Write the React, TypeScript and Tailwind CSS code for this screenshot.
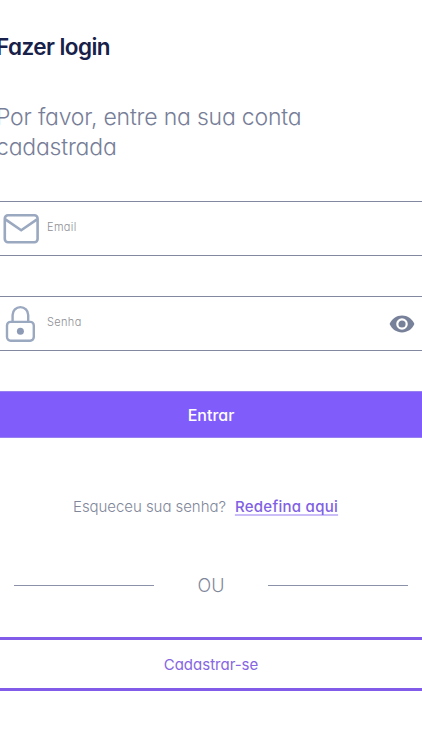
import React, { useState } from 'react';

const MailIcon: React.FC = () => (
    <svg viewBox="0 0 36 32" className="w-9 h-8 shrink-0" fill="none" stroke="#9aa8c0" strokeWidth="2.6">
        <rect x="1.8" y="2.3" width="32.8" height="27" rx="3.2" />
        <path d="M2.4 6.4 18.2 17.2 34 6.4" />
    </svg>
);

const LockIcon: React.FC = () => (
    <svg viewBox="0 0 30 38" className="w-[30px] h-[38px] shrink-0" fill="none" stroke="#9aa8c0" strokeWidth="2.4">
        <rect x="2" y="16.9" width="26.8" height="18.8" rx="3.6" />
        <path d="M7.6 16.5V9.900a7.800 7.800 0 0 1 15.600 0v6.600" />
        <circle cx="15.4" cy="26.2" r="3.5" fill="#8d9ab6" stroke="none" />
    </svg>
);

const EyeIcon: React.FC = () => (
    <svg viewBox="0 0 26 18" className="w-[26px] h-[18px]">
        <path d="M.6 9C2.800 3.800 7.600.6 13 .6S23.200 3.800 25.400 9c-2.200 5.200-7 8.400-12.400 8.400S2.800 14.200.6 9Z" fill="#78819a" />
        <circle cx="13" cy="9" r="4.7" fill="#78819a" stroke="#fff" strokeWidth="2.2" />
    </svg>
);

export default function App() {
    const [email, setEmail] = useState('');
    const [password, setPassword] = useState('');
    const [showPassword, setShowPassword] = useState(false);

    return (
        <div className="w-full h-[750px] overflow-hidden bg-white font-['Inter','Lato',sans-serif] [font-feature-settings:'cv11'] flex flex-col">
            {/* Heading */}
            <h1 className="mt-8 -ml-1 h-[30px] leading-[30px] text-[22.5px] font-semibold tracking-[-0.55px] text-[#17214a] whitespace-nowrap">
                Fazer login
            </h1>
            <p className="mt-[41px] -ml-1 h-[60px] leading-[29.5px] text-[23px] font-light tracking-[-0.2px] text-[#777e98]">
                Por favor, entre na sua conta<br />cadastrada
            </p>

            <form onSubmit={(e) => e.preventDefault()} className="mt-[38px] flex flex-col">
                {/* Email */}
                <label className="h-[55px] border-y border-[#8188a0] flex items-center pl-[3px]">
                    <MailIcon />
                    <input
                        type="email"
                        value={email}
                        onChange={(e) => setEmail(e.target.value)}
                        placeholder="Email"
                        className="ml-2 mb-[3px] flex-1 min-w-0 h-5 text-[11px] font-light tracking-[0.35px] text-gray-700 placeholder:text-[#8f8f95] outline-none"
                    />
                </label>

                {/* Password */}
                <label className="mt-10 h-[55px] border-y border-[#8188a0] flex items-center pl-[5px] pr-[7px]">
                    <LockIcon />
                    <input
                        type={showPassword ? 'text' : 'password'}
                        value={password}
                        onChange={(e) => setPassword(e.target.value)}
                        placeholder="Senha"
                        className="ml-3 mb-[3px] flex-1 min-w-0 h-5 text-[11px] font-light tracking-[0.35px] text-gray-700 placeholder:text-[#8f8f95] outline-none"
                    />
                    <button type="button" aria-label="Mostrar senha" onClick={() => setShowPassword(!showPassword)}>
                        <EyeIcon />
                    </button>
                </label>

                <button type="submit" className="mt-10 h-[47px] bg-[#805cfb] border-y border-[#9780ef] text-white text-base font-medium">
                    Entrar
                </button>
            </form>

            {/* Password recovery */}
            <div className="mt-[57px] h-6 pl-[73px] flex items-center whitespace-nowrap text-[15px]">
                <span className="font-light tracking-[-0.05px] text-[#7f879a]">Esqueceu sua senha?</span>
                <a href="#" className="ml-[9px] font-medium tracking-[0.28px] text-[#8060e3] underline decoration-[#cbbdf7] decoration-2 underline-offset-[2px] [text-decoration-skip-ink:none]">Redefina aqui</a>
            </div>

            {/* Divider */}
            <div className="mt-[54px] h-6 px-[14px] flex items-center justify-between">
                <div className="w-[140px] h-px bg-[#8a91a8]" />
                <span className="pt-px text-[18px] font-light text-[#7f879a]">OU</span>
                <div className="w-[140px] h-px bg-[#8a91a8]" />
            </div>

            <button className="mt-10 h-[54px] pt-[3px] border-y-[3px] border-[#805ce8] text-[15px] font-normal text-[#8666e2]">
                Cadastrar-se
            </button>
        </div>
    );
}
